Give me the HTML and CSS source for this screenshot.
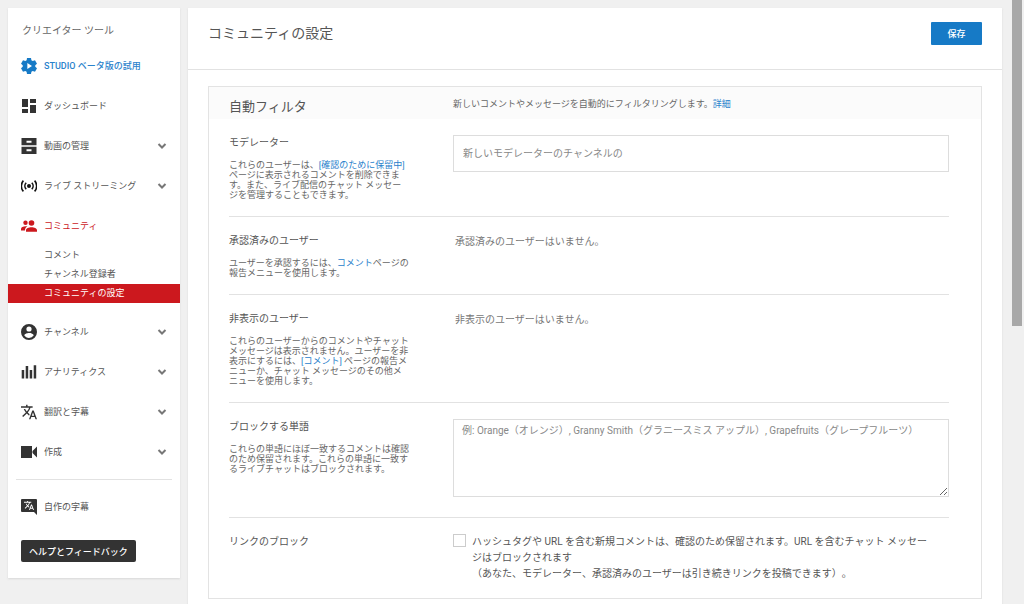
FILE: index.html
```html
<!DOCTYPE html>
<html lang="ja">
<head>
<meta charset="utf-8">
<meta name="viewport" content="width=device-width, initial-scale=1">
<title>コミュニティの設定</title>
<link rel="stylesheet" href="styles.css">
</head>
<body>
<svg class="sprite" aria-hidden="true">
  <symbol id="chevron" viewBox="0 0 10 10"><path d="M1.500 3 5 6.500 8.500 3" fill="none" stroke="currentColor" stroke-width="2"/></symbol>
</svg>
<div class="page">
  <nav class="sidebar" aria-label="クリエイター ツール">
    <h2 class="sidebar-title">クリエイター ツール</h2>
    <ul class="menu">
      <li><a class="item studio" href="#">
        <svg class="icon" viewBox="0 0 24 24"><path fill-rule="evenodd" d="M8.500 3.500 9 0h6l.6 3.400 2 1.200L21 3.400l3 5.200-2.600 2.200v2.400L24 15.400l-3 5.200-3.400-1.200-2 1.200L15 24H9l-.6-3.400-2-1.200L3 20.600l-3-5.200 2.600-2.200v-2.400L0 8.600l3-5.200 3.400 1.200zM9.500 7.500v9l7-4.500z"/></svg>
        <span>STUDIO ベータ版の試用</span></a></li>
      <li><a class="item" href="#">
        <svg class="icon" viewBox="0 0 16 16"><path d="M1 1H7v8H1zM9 1h6v4H9zM1 11H7v4H1zM9 7h6v8H9z"/></svg>
        <span>ダッシュボード</span></a></li>
      <li><a class="item" href="#">
        <svg class="icon" viewBox="0 0 16 16"><path fill-rule="evenodd" d="M.5 0h15v7.300H.5zM.5 8.700h15V16H.5zM5.500 2.700v2h5v-2zM5.500 11.300v2h5v-2z"/></svg>
        <span>動画の管理</span><svg class="chevron"><use href="#chevron"/></svg></a></li>
      <li><a class="item live" href="#">
        <svg class="icon" viewBox="0 0 16 16"><circle cx="8" cy="8" r="2"/><path d="M5.200 4.800a4.600 4.600 0 0 0 0 6.400M10.800 4.800a4.600 4.600 0 0 1 0 6.400M2.400 2.600a8 8 0 0 0 0 10.800M13.600 2.600a8 8 0 0 1 0 10.800" fill="none" stroke="currentColor" stroke-width="1.600"/></svg>
        <span>ライブ ストリーミング</span><svg class="chevron"><use href="#chevron"/></svg></a></li>
      <li><a class="item community" href="#">
        <svg class="icon" viewBox="0 0 16 16"><circle cx="4.500" cy="4.700" r="2.200"/><circle cx="10.500" cy="5" r="2.800"/><path d="M0 12.500V11c0-2 2-2.800 5-2.800.7 0 1 0 1.500.1C4.800 9.300 4 10.500 4 12.500zM5 13.800v-1.600C5 10.300 7.700 9.200 10.500 9.200S16 10.300 16 12.200v1.600z"/></svg>
        <span>コミュニティ</span></a>
        <ul class="submenu">
          <li><a href="#">コメント</a></li>
          <li><a href="#">チャンネル登録者</a></li>
          <li><a class="current" href="#" aria-current="page">コミュニティの設定</a></li>
        </ul></li>
      <li><a class="item" href="#">
        <svg class="icon" viewBox="0 0 20 20"><path fill-rule="evenodd" d="M10 0a10 10 0 1 0 0 20 10 10 0 0 0 0-20zm0 3a3.200 3.200 0 1 1 0 6.500A3.200 3.200 0 0 1 10 3zm0 14.400c-2.500 0-4.700-1.200-6-3.200 0-2 4-3.100 6-3.100s6 1.100 6 3.100a7.200 7.200 0 0 1-6 3.200z"/></svg>
        <span>チャンネル</span><svg class="chevron"><use href="#chevron"/></svg></a></li>
      <li><a class="item" href="#">
        <svg class="icon" viewBox="0 0 16 16"><path d="M.7 6h2.500v8.500H.7zM4.700 2h2.500v12.500H4.700zM8.700 6h2.500v8.500H8.700zM12.700 1.300h2.500v13.200h-2.500z"/></svg>
        <span>アナリティクス</span><svg class="chevron"><use href="#chevron"/></svg></a></li>
      <li><a class="item" href="#">
        <svg class="icon" viewBox="1 1 22 22"><path d="m12.870 15.070-2.540-2.510.03-.03A17.520 17.520 0 0 0 14.070 6H17V4h-7V2H8v2H1v1.990h11.170C11.500 7.920 10.440 9.750 9 11.350 8.070 10.320 7.300 9.190 6.690 8h-2c.73 1.630 1.730 3.170 2.980 4.560l-5.090 5.020L4 19l5-5 3.110 3.110zM18.500 10h-2L12 22h2l1.120-3h4.750L21 22h2zm-2.620 7 1.620-4.330L19.120 17z"/></svg>
        <span>翻訳と字幕</span><svg class="chevron"><use href="#chevron"/></svg></a></li>
      <li><a class="item" href="#">
        <svg class="icon" viewBox="0 0 16 16"><path d="M0 2h11v12H0zM16 2.500v11L11.500 9V7z"/></svg>
        <span>作成</span><svg class="chevron"><use href="#chevron"/></svg></a></li>
    </ul>
    <hr class="sidebar-rule">
    <a class="item" href="#">
      <svg class="icon" viewBox="0 0 16 16"><path d="M1 0h14q1 0 1 1v15l-3-3H1q-1 0-1-1V1q0-1 1-1z"/><svg x="3" y="1.500" width="10" height="10" viewBox="1 1 22 22"><path class="knockout" d="m12.870 15.070-2.540-2.510.03-.03A17.520 17.520 0 0 0 14.070 6H17V4h-7V2H8v2H1v1.990h11.170C11.500 7.920 10.440 9.750 9 11.350 8.070 10.320 7.300 9.190 6.690 8h-2c.73 1.630 1.730 3.170 2.980 4.560l-5.090 5.020L4 19l5-5 3.110 3.110zM18.500 10h-2L12 22h2l1.120-3h4.750L21 22h2zm-2.620 7 1.620-4.330L19.120 17z"/></svg></svg>
      <span>自作の字幕</span></a>
    <button class="feedback" type="button">ヘルプとフィードバック</button>
  </nav>

  <main class="content">
    <header class="content-header">
      <h1>コミュニティの設定</h1>
      <button class="save" type="submit" form="settings">保存</button>
    </header>
    <form class="panel" id="settings">
      <div class="panel-header">
        <h2>自動フィルタ</h2>
        <p>新しいコメントやメッセージを自動的にフィルタリングします。<a href="#">詳細</a></p>
      </div>
      <section class="row">
        <div class="about">
          <h3><label for="moderators">モデレーター</label></h3>
          <p>これらのユーザーは、<a href="#">[確認のために保留中]</a><br>ページに表示されるコメントを削除できま<br>す。また、ライブ配信のチャット メッセー<br>ジを管理することもできます。</p>
        </div>
        <div class="field"><input class="text" id="moderators" type="text" placeholder="新しいモデレーターのチャンネルの"></div>
      </section>
      <section class="row">
        <div class="about">
          <h3>承認済みのユーザー</h3>
          <p>ユーザーを承認するには、<a href="#">コメント</a>ページの<br>報告メニューを使用します。</p>
        </div>
        <div class="field"><p class="empty">承認済みのユーザーはいません。</p></div>
      </section>
      <section class="row">
        <div class="about">
          <h3>非表示のユーザー</h3>
          <p>これらのユーザーからのコメントやチャット<br>メッセージは表示されません。ユーザーを非<br>表示にするには、<a href="#">[コメント]</a> ページの報告メ<br>ニューか、チャット メッセージのその他メ<br>ニューを使用します。</p>
        </div>
        <div class="field"><p class="empty">非表示のユーザーはいません。</p></div>
      </section>
      <section class="row">
        <div class="about">
          <h3><label for="words">ブロックする単語</label></h3>
          <p>これらの単語にほぼ一致するコメントは確認<br>のため保留されます。これらの単語に一致す<br>るライブチャットはブロックされます。</p>
        </div>
        <div class="field"><textarea class="words" id="words" placeholder="例: Orange（オレンジ）, Granny Smith（グラニースミス アップル）, Grapefruits（グレープフルーツ）"></textarea></div>
      </section>
      <section class="row">
        <div class="about"><h3>リンクのブロック</h3></div>
        <div class="field check">
          <input class="box" id="links" type="checkbox">
          <label for="links">ハッシュタグや URL を含む新規コメントは、確認のため保留されます。URL を含むチャット メッセー<br>ジはブロックされます<br>（あなた、モデレーター、承認済みのユーザーは引き続きリンクを投稿できます）。</label>
        </div>
      </section>
    </form>
  </main>
  <div class="scrollbar" aria-hidden="true"><div class="thumb"></div></div>
</div>
</body>
</html>
```

FILE: styles.css
```css
* { box-sizing: border-box; }

body {
  margin: 0;
  background: #f0f0f0;
  color: #555;
  font: 9px/10px Roboto, "Noto Sans CJK JP", sans-serif;
  text-spacing-trim: space-all;
}

h1, h2, h3, p, ul { margin: 0; padding: 0; font-weight: 400; }
ul { list-style: none; }
a { color: #2a82cc; text-decoration: none; }
button, input, textarea { font-family: inherit; }

.sprite { display: none; }

.page {
  display: flex;
  align-items: flex-start;
  gap: 8px;
  min-height: 100vh;
  padding-left: 8px;
}

/* Sidebar */
.sidebar {
  flex: 0 0 172px;
  margin-top: 8px;
  padding: 8px 0 16px;
  background: #fff;
  box-shadow: 0 1px 2px #d8d8d8;
}

.sidebar-title { padding-left: 14px; font-size: 10px; line-height: 30px; color: #666; }

.item {
  display: flex;
  align-items: center;
  gap: 7px;
  height: 40px;
  padding: 0 13px;
  color: #555;
}

.icon { flex: none; width: 16px; height: 16px; fill: #333; color: #333; }
.knockout { fill: #fff; }
.chevron { width: 10px; height: 10px; margin-left: auto; color: #777; }

.studio { color: #2a82cc; font-weight: 500; }
.studio .icon { fill: #167ac6; }
.live .icon { fill: #111; color: #111; }
.community { color: #cc181e; }
.community .icon { fill: #cc181e; }

.submenu { margin-bottom: 9px; }
.submenu a { display: block; padding-left: 36px; line-height: 19px; color: #555; }
.submenu .current { background: #cc181e; color: #fff; }

.sidebar-rule { margin: 7px 8px; border: 0; border-top: 1px solid #e2e2e2; }

.feedback {
  display: block;
  height: 22px;
  margin: 13px 13px 0;
  padding: 0 8px;
  border: 0;
  border-radius: 2px;
  background: #333;
  color: #fff;
  font-size: 9px;
  font-weight: 500;
}

/* Main column */
.content {
  flex: 1;
  align-self: stretch;
  min-width: 0;
  margin-top: 8px;
  background: #fff;
  box-shadow: 0 1px 2px #d8d8d8;
}

.content-header {
  display: flex;
  align-items: flex-start;
  justify-content: space-between;
  padding: 14px 20px 24px;
  border-bottom: 1px solid #e2e2e2;
}

.content-header h1 { font-size: 14px; line-height: 23px; }

.save {
  width: 51px;
  height: 23px;
  padding: 0;
  border: 0;
  border-radius: 1px;
  background: #167ac6;
  color: #fff;
  font-size: 9px;
  font-weight: 500;
}

.panel { margin: 16px 20px 5px; border: 1px solid #e3e3e3; }

.panel-header, .row { display: grid; grid-template-columns: 180px 1fr; column-gap: 44px; }

.panel-header { padding: 8px 32px 0 20px; background: #fbfbfb; }
.panel-header h2 { font-size: 13px; line-height: 24px; }
.panel-header p { line-height: 18px; color: #666; }

.row { margin: 0 32px 0 20px; padding: 16px 0; }
.row + .row { border-top: 1px solid #e2e2e2; }

.about h3 { font-size: 10px; line-height: 16px; }
.about p { margin-top: 9px; white-space: nowrap; color: #666; }

.field { min-width: 0; font-size: 10px; line-height: 16px; }

.text, .words {
  display: block;
  width: 100%;
  border: 1px solid #ddd;
  background: #fff;
  color: #555;
}

.text { height: 37px; padding: 0 9px; font-size: 10px; }
.words { height: 78px; margin-bottom: 4px; padding: 3px 8px; font-size: 10px; line-height: 16px; resize: vertical; }
.text::placeholder, .words::placeholder { color: #888; }

.empty { padding-left: 2px; line-height: 18px; color: #777; }

.check { display: flex; align-items: flex-start; gap: 6px; }

.box {
  flex: none;
  appearance: none;
  width: 13px;
  height: 13px;
  margin: 0;
  border: 1px solid #ccc;
  background: #fff;
}
.box:checked { background: #167ac6; }

/* Scroll indicator */
.scrollbar { width: 14px; padding: 0 2px; align-self: stretch; }
.thumb { height: 54vh; background: #a8a8a8; }
```
